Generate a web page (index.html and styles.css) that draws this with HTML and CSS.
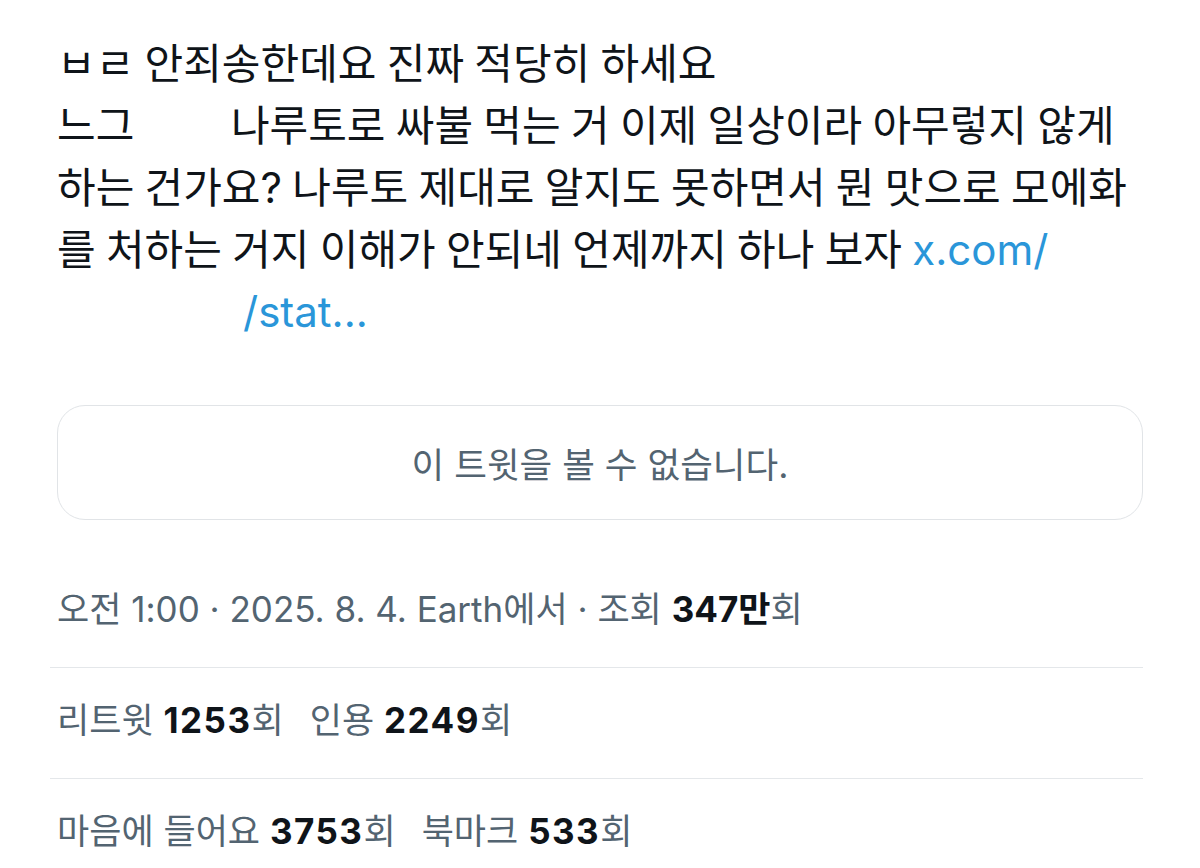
FILE: index.html
```html
<!DOCTYPE html>
<html lang="ko">
<head>
    <meta charset="UTF-8">
    <meta name="viewport" content="width=device-width, initial-scale=1.0">
    <title>트윗</title>
    <link rel="stylesheet" href="styles.css">
</head>
<body>
    <div class="tweet">
        <p class="tweet-text">ㅂㄹ 안죄송한데요 진짜 적당히 하세요<br>느그 <span class="hidden-name"></span> 나루토로 싸불 먹는 거 이제 일상이라 아무렇지 않게 하는 건가요? 나루토 제대로 알지도 못하면서 뭔 맛으로 모에화를 처하는 거지 이해가 안되네 언제까지 하나 보자 <a class="link" href="#">x.com/<span class="hidden-link"></span>/stat...</a></p>

        <div class="quote-card">이 트윗을 볼 수 없습니다.</div>

        <div class="meta">
            <div class="meta-row">오전 1:00 · 2025. 8. 4. Earth에서 · 조회&nbsp;<strong>347만</strong>회</div>
            <div class="meta-row">
                <span class="stat">리트윗 <strong>1253</strong>회</span>
                <span class="stat">인용 <strong>2249</strong>회</span>
            </div>
            <div class="meta-row">
                <span class="stat">마음에 들어요 <strong>3753</strong>회</span>
                <span class="stat">북마크 <strong>533</strong>회</span>
            </div>
        </div>
    </div>
</body>
</html>
```

FILE: styles.css
```css
body {
    margin: 0;
    background-color: #ffffff;
    font-family: Inter, "Noto Sans CJK KR", sans-serif;
    color: #0f1419;
}
.tweet {
    padding: 33px 57px 0 57px;
}
.tweet-text {
    margin: 0;
    font-size: 42px;
    line-height: 62px;
    word-spacing: -1.5px;
}
.hidden-name {
    display: inline-block;
    width: 76px;
}
.hidden-link {
    display: inline-block;
    width: 186px;
}
.link {
    color: #2a96d9;
    text-decoration: none;
}
.quote-card {
    margin-top: 62px;
    height: 115px;
    border: 1.5px solid #e1e4e7;
    border-radius: 28px;
    box-sizing: border-box;
    display: flex;
    align-items: center;
    justify-content: center;
    font-size: 35.5px;
    color: #536471;
}
.meta {
    margin-top: 37px;
    margin-left: -7px;
}
.meta-row {
    height: 111px;
    box-sizing: border-box;
    display: flex;
    align-items: center;
    padding: 0 0 12px 7px;
    font-size: 35px;
    color: #536471;
    border-bottom: 1.5px solid #e4e7ea;
}
.meta-row:last-child {
    border-bottom: none;
}
.meta-row strong {
    color: #0f1419;
    font-weight: 700;
}
.stat {
    margin-right: 26px;
}
.stat strong {
    letter-spacing: 1.5px;
}
```
